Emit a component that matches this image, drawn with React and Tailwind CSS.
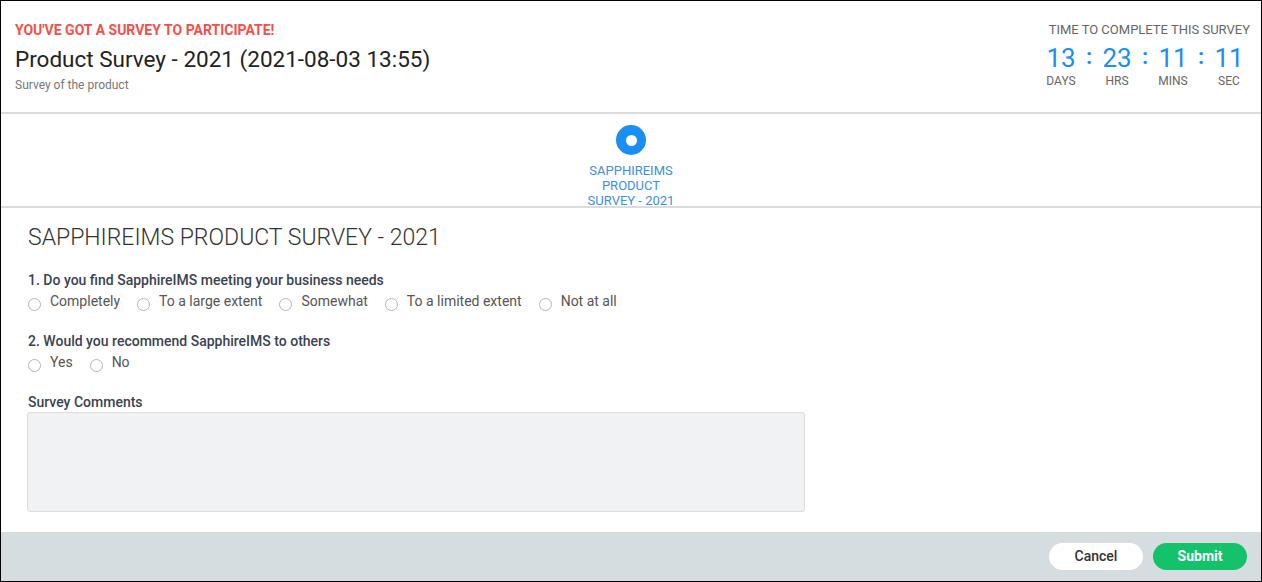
import React, { useState } from 'react';

const q1Options = ['Completely', 'To a large extent', 'Somewhat', 'To a limited extent', 'Not at all'];
const q2Options = ['Yes', 'No'];

const Radio = ({ label, checked, onChange }) => (
  <label className="flex items-center mr-[17px] cursor-pointer" onClick={onChange}>
    <span
      className={`w-[13px] h-[13px] rounded-full border bg-white mt-[7px] mr-[9px] flex items-center justify-center ${checked ? 'border-[#1e90f0]' : 'border-[#b5b5b5]'}`}
    >
      {checked && <span className="w-[7px] h-[7px] rounded-full bg-[#1e90f0]" />}
    </span>
    <span className="text-[14px] leading-[20px] text-[#555]">{label}</span>
  </label>
);

const TimeBlock = ({ value, label }) => (
  <div className="flex flex-col items-center w-[30px]">
    <span className="text-[26px] leading-[28px] text-[#1b8ef2]">{value}</span>
    <span className="text-[12px] leading-[16px] text-[#666] mt-[1px]">{label}</span>
  </div>
);

const Colon = () => (
  <span className="text-[22px] leading-[26px] text-[#1b8ef2] font-bold w-[26px] text-center self-start">:</span>
);

export default function App() {
  const [a1, setA1] = useState(null);
  const [a2, setA2] = useState(null);

  return (
    <div
      className="w-[1262px] h-[582px] border border-black flex flex-col bg-white overflow-hidden"
      style={{ fontFamily: 'Roboto, "Liberation Sans", sans-serif' }}
    >
      {/* header */}
      <div className="h-[113px] flex justify-between px-[14px] border-b-2 border-[#dcdcdc] shrink-0">
        <div className="pt-[21px]">
          <div className="text-[14px] leading-[16px] font-bold text-[#f4504b]">YOU'VE GOT A SURVEY TO PARTICIPATE!</div>
          <div className="text-[22.5px] leading-[26px] text-[#222] mt-[8px]">Product Survey - 2021 (2021-08-03 13:55)</div>
          <div className="text-[12px] leading-[16px] text-[#777] mt-[5px]">Survey of the product</div>
        </div>
        <div className="pt-[21px] flex flex-col items-end">
          <div className="text-[13px] leading-[16px] text-[#666] mr-[-3px]">TIME TO COMPLETE THIS SURVEY</div>
          <div className="flex items-start mt-[6px] mr-[3px]">
            <TimeBlock value="13" label="DAYS" />
            <Colon />
            <TimeBlock value="23" label="HRS" />
            <Colon />
            <TimeBlock value="11" label="MINS" />
            <Colon />
            <TimeBlock value="11" label="SEC" />
          </div>
        </div>
      </div>

      {/* stepper */}
      <div className="h-[94px] shrink-0 border-b-2 border-[#dcdcdc] overflow-hidden flex justify-center">
        <div className="flex flex-col items-center pt-[11px] w-[100px]">
          <div className="w-[30px] h-[30px] shrink-0 rounded-full bg-[#1b8ef2] flex items-center justify-center">
            <div className="w-[11px] h-[11px] rounded-full bg-white" />
          </div>
          <div className="shrink-0 text-[13px] leading-[15px] text-[#3d8fe0] text-center mt-[8px] w-[100px]">
            SAPPHIREIMS PRODUCT SURVEY - 2021
          </div>
        </div>
      </div>

      {/* content */}
      <div className="flex-1 px-[27px] pt-[15px]">
        <div className="text-[23px] leading-[30px] font-light text-[#333]">SAPPHIREIMS PRODUCT SURVEY - 2021</div>

        <div className="mt-[18px] text-[14px] leading-[18px] font-medium text-[#3b4250]">1. Do you find SapphireIMS meeting your business needs</div>
        <div className="flex mt-[2px]">
          {q1Options.map((o) => (
            <Radio key={o} label={o} checked={a1 === o} onChange={() => setA1(o)} />
          ))}
        </div>

        <div className="mt-[21px] text-[14px] leading-[18px] font-medium text-[#3b4250]">2. Would you recommend SapphireIMS to others</div>
        <div className="flex mt-[2px]">
          {q2Options.map((o) => (
            <Radio key={o} label={o} checked={a2 === o} onChange={() => setA2(o)} />
          ))}
        </div>

        <div className="mt-[21px] text-[14px] leading-[18px] font-medium text-[#3b4250]">Survey Comments</div>
        <textarea className="mt-[1px] ml-[-1px] w-[778px] h-[100px] bg-[#f0f2f4] border border-[#dcdcdc] rounded-[3px] resize-none outline-none block" />
      </div>

      {/* footer */}
      <div className="h-[49px] shrink-0 bg-[#d6dde1] flex items-center justify-end pr-[14px] gap-[10px]">
        <button className="w-[94px] h-[27px] rounded-full bg-white text-[14px] font-medium text-[#333]">Cancel</button>
        <button className="w-[94px] h-[27px] rounded-full bg-[#13c26a] text-[14px] font-bold text-white">Submit</button>
      </div>
    </div>
  );
}
